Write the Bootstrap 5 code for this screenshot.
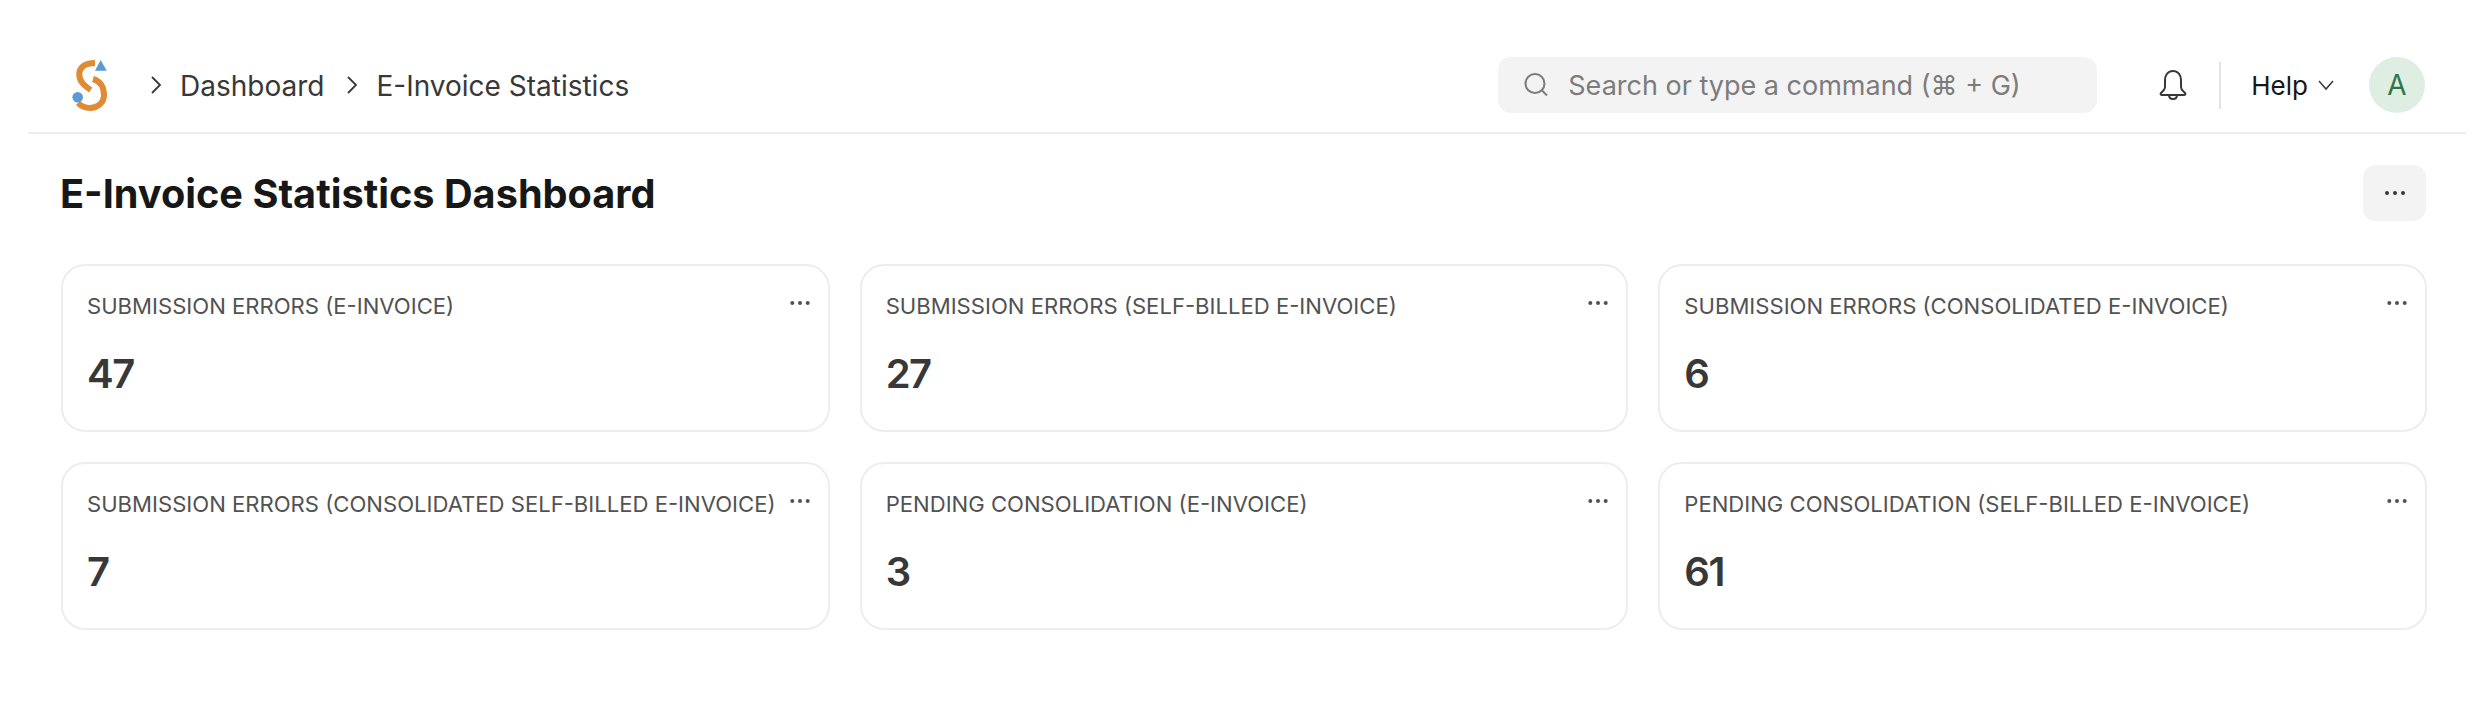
<!doctype html>
<html lang="en">
  <head>
    <meta charset="utf-8">
    <meta name="viewport" content="width=device-width, initial-scale=1">
    <title>E-Invoice Statistics Dashboard</title>
    <link href="https://cdn.jsdelivr.net/npm/bootstrap@5.3.0/dist/css/bootstrap.min.css" rel="stylesheet">
    <style>
      body {
        font-family: Inter, "Liberation Sans", sans-serif;
        background: #fff;
        color: #383838;
      }
      .top-bar {
        height: 134px;
        margin: 0 26px 0 28px;
        padding: 38px 41px 0 42px;
        border-bottom: 2px solid #ededed;
      }
      .logo-mark { width: 40px; height: 56px; margin-right: 38px; }
      .crumb-list { font-size: 28px; line-height: 1; color: #383838; gap: 16px; }
      .crumb-list a { color: inherit; text-decoration: none; padding-top: 2px; }
      .search-box {
        width: 599px;
        height: 56px;
        padding: 0 24px 0 25px;
        gap: 19px;
        background: #f3f3f3;
        border-radius: 13px;
        color: #7c7c7c;
        font-size: 27px;
      }
      .search-box span { padding-top: 2px; }
      .bell-wrap { margin-left: 62px; }
      .nav-divider { width: 2px; height: 47px; background: #e2e2e2; margin: 0 30px 0 32px; }
      .help-link { font-size: 26px; color: #171717; text-decoration: none; gap: 9px; }
      .user-avatar {
        width: 56px;
        height: 56px;
        margin-left: 34px;
        border-radius: 50%;
        background: #deeee2;
        color: #30744b;
        font-size: 28px;
      }
      .page-head { padding: 37px 66px 0 60px; height: 130px; }
      .page-head h1 { font-size: 39.7px; font-weight: 700; color: #171717; margin: 0; }
      .dots-btn {
        width: 63px;
        height: 56px;
        margin-top: -6px;
        border: 0;
        border-radius: 13px;
        background: #f3f3f3;
        padding: 0;
      }
      .stat-grid { --bs-gutter-x: 30px; --bs-gutter-y: 30px; margin-left: 46px; margin-right: 50px; }
      .stat-box {
        height: 168px;
        border: 2px solid #ededed;
        border-radius: 24px;
        padding: 25px 0 0 24px;
      }
      .stat-title { font-size: 22.1px; line-height: 30px; color: #525252; }
      .stat-num { font-size: 40px; font-weight: 600; letter-spacing: -1.5px; line-height: 48px; color: #383838; margin-top: 29px; }
      .stat-menu { position: absolute; top: 34px; right: 18px; width: 20px; height: 6px; }
    </style>
  </head>
  <body>
    <nav class="top-bar d-flex align-items-center">
      <svg class="logo-mark" viewBox="70 57 40 56" aria-label="logo">
        <path d="M95 63C84 63 79 68 79.300 75C79.500 82 85 86 90.700 90" fill="none" stroke="#e08a33" stroke-width="6"/>
        <path d="M93 79C100 81 104 87 104 95C104 103 97 108 90 108C85 108 81 106 78 103" fill="none" stroke="#e08a33" stroke-width="6"/>
        <path d="M100.700 60L106.700 70.700H95Z" fill="#5b9bd5"/>
        <circle cx="77.700" cy="97.300" r="5.300" fill="#5b9bd5"/>
      </svg>
      <div class="crumb-list d-flex align-items-center">
        <svg width="16" height="18" viewBox="0 0 16 18"><path d="M4 1l8 8-8 8" fill="none" stroke="#383838" stroke-width="1.800"/></svg>
        <a href="#" class="me-1">Dashboard</a>
        <svg width="16" height="18" viewBox="0 0 16 18"><path d="M4 1l8 8-8 8" fill="none" stroke="#383838" stroke-width="1.800"/></svg>
        <a href="#">E-Invoice Statistics</a>
      </div>
      <div class="search-box d-flex align-items-center ms-auto">
        <svg width="26" height="26" viewBox="0 0 26 26"><circle cx="12" cy="11.500" r="9.500" fill="none" stroke="#7c7c7c" stroke-width="2"/><path d="M19 18.500l5 5" stroke="#7c7c7c" stroke-width="2"/></svg>
        <span>Search or type a command (⌘ + G)</span>
      </div>
      <div class="bell-wrap d-flex">
        <svg width="28" height="32" viewBox="0 0 28 32"><path d="M14 2C9 2 6 6 6 11v7c0 3-2 4-4 6-1 1 0 2 1 2h22c1 0 2-1 1-2-2-2-4-3-4-6v-7c0-5-3-9-8-9ZM10 26c0 3 2 4 4 4s4-1 4-4" fill="none" stroke="#383838" stroke-width="2" stroke-linejoin="round"/></svg>
      </div>
      <div class="nav-divider"></div>
      <a href="#" class="help-link d-flex align-items-center">Help
        <svg width="18" height="12" viewBox="0 0 18 12"><path d="M2 2l7 8 7-8" fill="none" stroke="#383838" stroke-width="1.500"/></svg>
      </a>
      <div class="user-avatar d-flex align-items-center justify-content-center">A</div>
    </nav>

    <div class="page-head d-flex justify-content-between align-items-start">
      <h1>E-Invoice Statistics Dashboard</h1>
      <button class="dots-btn d-flex align-items-center justify-content-center" type="button" aria-label="Menu">
        <svg width="22" height="6" viewBox="0 0 22 6" fill="#383838"><circle cx="3" cy="3" r="2"/><circle cx="11" cy="3" r="2"/><circle cx="19" cy="3" r="2"/></svg>
      </button>
    </div>

    <div class="row stat-grid">
      <div class="col-4"><div class="stat-box position-relative">
        <div class="stat-title">SUBMISSION ERRORS (E-INVOICE)</div>
        <div class="stat-num">47</div>
        <svg class="stat-menu" viewBox="0 0 20 6" fill="#525252"><circle cx="2.300" cy="3" r="2"/><circle cx="10" cy="3" r="2"/><circle cx="17.700" cy="3" r="2"/></svg>
      </div></div>
      <div class="col-4"><div class="stat-box position-relative">
        <div class="stat-title">SUBMISSION ERRORS (SELF-BILLED E-INVOICE)</div>
        <div class="stat-num">27</div>
        <svg class="stat-menu" viewBox="0 0 20 6" fill="#525252"><circle cx="2.300" cy="3" r="2"/><circle cx="10" cy="3" r="2"/><circle cx="17.700" cy="3" r="2"/></svg>
      </div></div>
      <div class="col-4"><div class="stat-box position-relative">
        <div class="stat-title">SUBMISSION ERRORS (CONSOLIDATED E-INVOICE)</div>
        <div class="stat-num">6</div>
        <svg class="stat-menu" viewBox="0 0 20 6" fill="#525252"><circle cx="2.300" cy="3" r="2"/><circle cx="10" cy="3" r="2"/><circle cx="17.700" cy="3" r="2"/></svg>
      </div></div>
      <div class="col-4"><div class="stat-box position-relative">
        <div class="stat-title">SUBMISSION ERRORS (CONSOLIDATED SELF-BILLED E-INVOICE)</div>
        <div class="stat-num">7</div>
        <svg class="stat-menu" viewBox="0 0 20 6" fill="#525252"><circle cx="2.300" cy="3" r="2"/><circle cx="10" cy="3" r="2"/><circle cx="17.700" cy="3" r="2"/></svg>
      </div></div>
      <div class="col-4"><div class="stat-box position-relative">
        <div class="stat-title">PENDING CONSOLIDATION (E-INVOICE)</div>
        <div class="stat-num">3</div>
        <svg class="stat-menu" viewBox="0 0 20 6" fill="#525252"><circle cx="2.300" cy="3" r="2"/><circle cx="10" cy="3" r="2"/><circle cx="17.700" cy="3" r="2"/></svg>
      </div></div>
      <div class="col-4"><div class="stat-box position-relative">
        <div class="stat-title">PENDING CONSOLIDATION (SELF-BILLED E-INVOICE)</div>
        <div class="stat-num">61</div>
        <svg class="stat-menu" viewBox="0 0 20 6" fill="#525252"><circle cx="2.300" cy="3" r="2"/><circle cx="10" cy="3" r="2"/><circle cx="17.700" cy="3" r="2"/></svg>
      </div></div>
    </div>
    <script src="https://cdn.jsdelivr.net/npm/bootstrap@5.3.0/dist/js/bootstrap.bundle.min.js"></script>
  </body>
</html>
